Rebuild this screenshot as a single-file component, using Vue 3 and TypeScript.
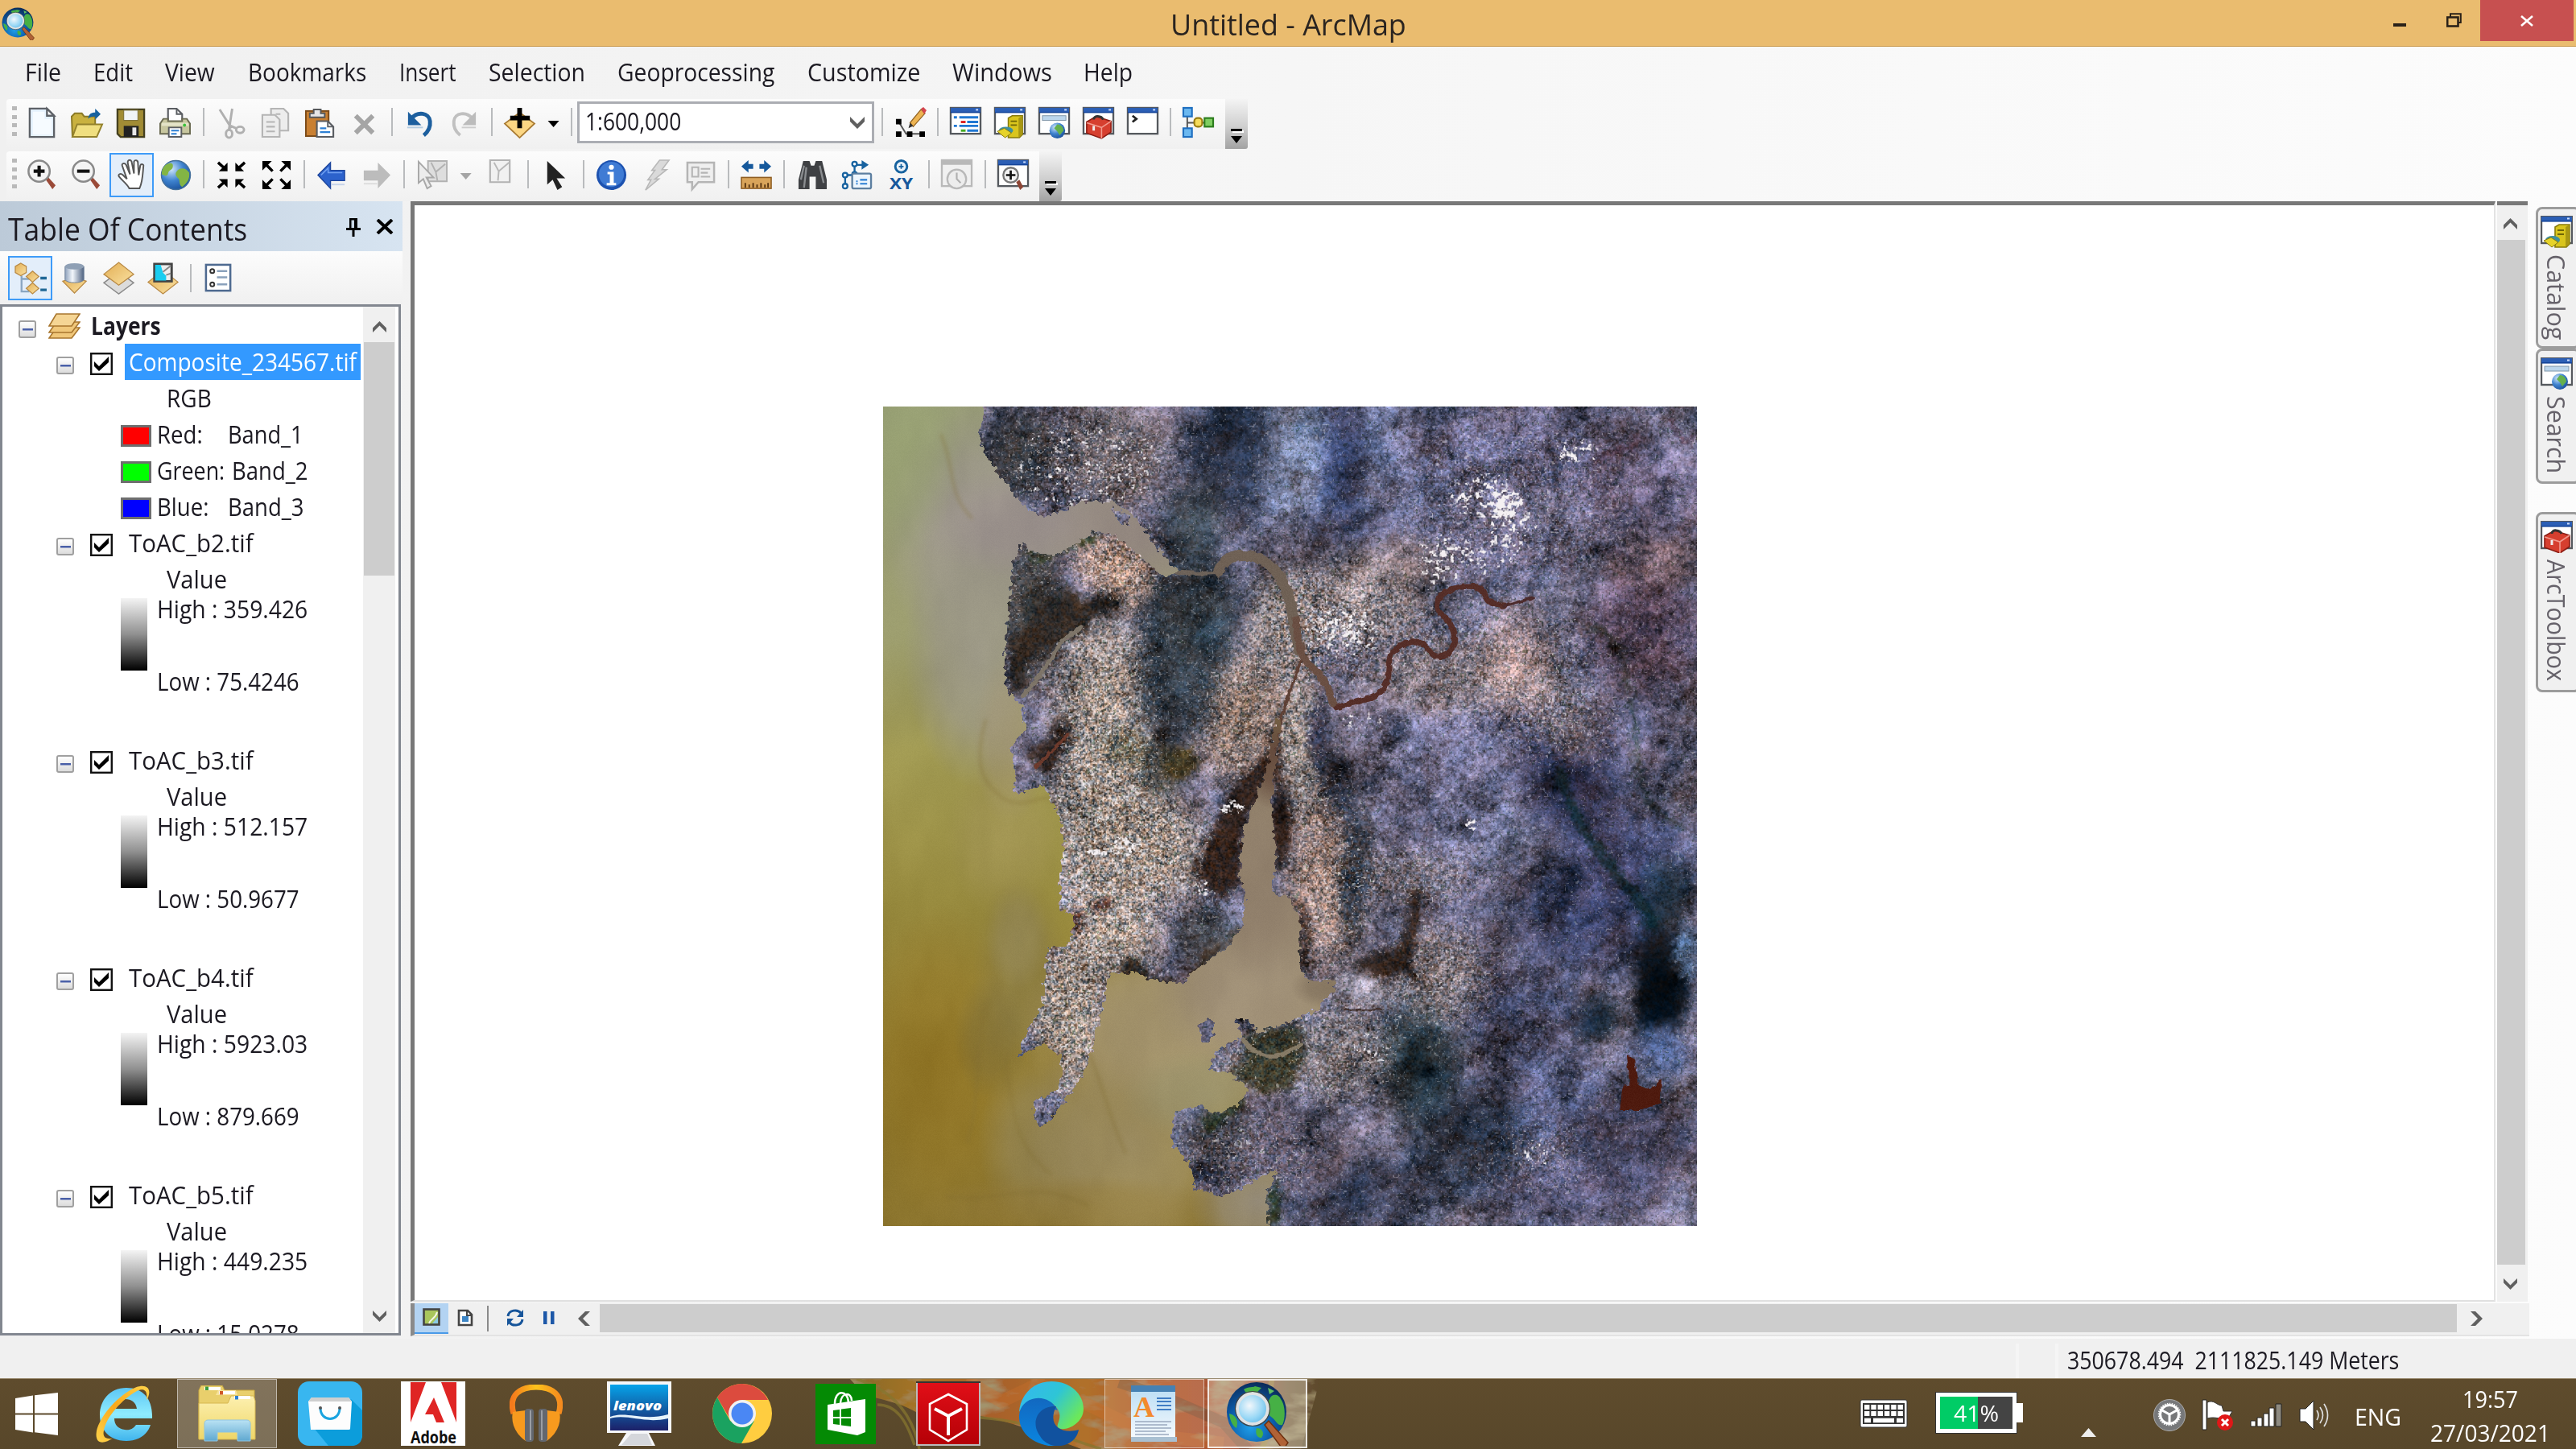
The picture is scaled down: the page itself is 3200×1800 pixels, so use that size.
<script setup lang="ts">
import { onMounted, ref } from 'vue'

type Item = { k: 'b' | 's' | 'c' | 'combo'; i?: string; on?: boolean }

/* squeezes a label along its reading direction so that it takes exactly the given length */
const vFit = {
  mounted(el: HTMLElement, binding: { value: number; arg?: string }) {
    if (binding.arg === 'y') {
      el.style.transform = `scaleY(${binding.value / el.offsetHeight})`
      return
    }
    const natural = el.offsetWidth
    el.style.transform = `scaleX(${binding.value / natural})`
    el.style.marginRight = `${binding.value - natural}px`
  },
}

const menus: [string, number, number][] = [
  ['File', 45, 31], ['Edit', 49, 40], ['View', 62, 40], ['Bookmarks', 147, 41], ['Insert', 71, 41],
  ['Selection', 120, 40], ['Geoprocessing', 195, 40], ['Customize', 140, 41], ['Windows', 124, 39], ['Help', 61, 40],
]

const win = '<rect x="1" y="1" width="38" height="33" fill="#fff" stroke="#55595e" stroke-width="2.4"/><rect x="1" y="1" width="38" height="6" fill="#2c5fb5"/><rect x="1" y="6" width="38" height="1.6" fill="#17469a"/><rect x="33" y="2.5" width="3" height="2" fill="#cfe0ff"/>'
const layerTop = 'fill="url(#gold)" stroke="#b98a45" stroke-width="1.3"'

const icons: Record<string, string> = {
  doc: '<path d="M4 2h22l9 9v27H4z" fill="#e4f1fd" stroke="#5d6167" stroke-width="2.4"/><path d="M8 6h15v9h9v20H8z" fill="#f6fbff"/><path d="M26 2v9h9z" fill="#fff" stroke="#5d6167" stroke-width="2.4"/>',
  open: '<path d="M1 12l4-4h9l3 4h14v26H2z" fill="#c9b13f" stroke="#8b7a26" stroke-width="2"/><path d="M8 22h32l-7 16H2z" fill="#f0df80" stroke="#94822c" stroke-width="2"/><path d="M22 15c1-7 5-8 9-8V2l7 7-7 7v-4c-4 0-6 0-9 3z" fill="#17629f"/>',
  save: '<path d="M3 3h34v35H7l-4-4z" fill="#a18c35" stroke="#45401f" stroke-width="2.4"/><rect x="11" y="4" width="18" height="13" fill="#f1f4f7" stroke="#7a6d35"/><rect x="11" y="24" width="19" height="14" fill="#222"/><rect x="22" y="26" width="5" height="10" fill="#e8e8e8"/>',
  print: '<path d="M11 17V2h11l7 7v8" fill="#fff" stroke="#5a5d62" stroke-width="2.2"/><path d="M22 2v7h7" fill="none" stroke="#5a5d62" stroke-width="2"/><path d="M5 15h6v3h18v-3h6l4 6v13H1V21z" fill="#c7c69f" stroke="#6a6a52" stroke-width="2"/><rect x="3" y="20" width="34" height="4" fill="#e4e3c8"/><circle cx="32" cy="23" r="2" fill="#3bc13b"/><path d="M12 26h16v12H12z" fill="#fff" stroke="#5a5d62" stroke-width="2"/><path d="M15 30h10M15 34h7" stroke="#2d7fd3" stroke-width="2"/>',
  cut: '<g fill="none" stroke="#b0b0b0" stroke-width="3"><path d="M5 3l15 24M21 2l-4 26"/><ellipse cx="17" cy="34" rx="4" ry="5"/><ellipse cx="31" cy="29" rx="5" ry="4"/><path d="M19 24l7 3"/></g>',
  copy: '<g fill="#ededed" stroke="#b5b5b5" stroke-width="2.2"><path d="M14 2h16l6 6v22H14z"/><path d="M3 10h16l6 6v22H3z"/><path d="M8 19h11M8 25h11M8 31h11M20 9h6"/></g>',
  paste: '<rect x="2" y="5" width="29" height="32" fill="#c98032" stroke="#7b4a18" stroke-width="2"/><path d="M7 12V8h5V3h9v5h5v5H7z" fill="#e6e6e6" stroke="#56585b" stroke-width="2"/><path d="M16 18h14l7 7v13H16z" fill="#fff" stroke="#5a5d62" stroke-width="2.2"/><path d="M30 18v7h7" fill="none" stroke="#5a5d62" stroke-width="2"/><path d="M20 27h8M20 32h13" stroke="#2d7fd3" stroke-width="2.4"/>',
  del: '<path d="M9 11l22 22M31 11L9 33" stroke="#a5a5a5" stroke-width="6"/>',
  undo: '<path d="M9 15C17 5 32 7 33 18c1 9-3 14-8 18" fill="none" stroke="#1d5f9e" stroke-width="5"/><path d="M5 6v17h17z" fill="#1d5f9e"/><path d="M4 26h20" stroke="#b5cce0" stroke-width="2"/>',
  redo: '<path d="M31 15C23 5 8 7 7 18c-1 9 3 14 8 18" fill="none" stroke="#c0c0c0" stroke-width="4"/><path d="M35 6v17H18z" fill="#bcbcbc"/><path d="M17 26h18" stroke="#ccc" stroke-width="2"/>',
  add: '<path d="M20 7L39 21 20 39 1 21z" fill="#fbd684" stroke="#a97b33" stroke-width="1.8"/><path d="M20 1v26M8 14h25" stroke="#000" stroke-width="6"/>',
  edit: '<path d="M5 18L15 34h19M5 18v2" fill="none" stroke="#555" stroke-width="2"/><path d="M2 15h7v7H2zM2 31h7v7H2zM16 31h7v7h-7zM32 31h7v7h-7z"/><path d="M20 20L34 3l5 5-15 17z" fill="#edb452" stroke="#926323" stroke-width="1.3"/><path d="M34 2l3-2 4 4-3 5z" fill="#d4454e"/><path d="M18 27l2-7 4 4z" fill="#333"/>',
  tocw: win + '<path d="M5 13h4M5 24h4" stroke="#2077d2" stroke-width="3"/><path d="M12 13h24M12 24h24M22 19h14M22 30h14" stroke="#2077d2" stroke-width="3"/><path d="M14 19h6" stroke="#d22" stroke-width="3"/><path d="M14 30h6" stroke="#4a2" stroke-width="3"/>',
  catalog: win + '<path d="M18 14l5-3h13v24l-4 4H18z" fill="#d9c51d" stroke="#877a0c" stroke-width="1.6"/><path d="M31 14l5-3v24l-5 4z" fill="#a89713"/><path d="M21 18h8M21 23h8" stroke="#6f6507" stroke-width="1.8"/><ellipse cx="15" cy="30" rx="9" ry="5" fill="#3f8f9f"/><path d="M4 31l9-4 9 6-8 6z" fill="#e6d32a" stroke="#877a0c"/>',
  search: win + '<rect x="5" y="11" width="30" height="6" fill="#bcd6ec" stroke="#8096a8"/><circle cx="24" cy="30" r="10" fill="url(#globe)"/><path d="M24 22c5 0 8 4 8 8l-5 6-3-5-4-4z" fill="#65b14d"/>',
  toolbox: win + '<path d="M5 19l12-7 19 6v14l-12 8L5 33z" fill="#d63f2f" stroke="#8b1c13" stroke-width="1.6"/><path d="M5 20l19 6 12-8M24 26v14" stroke="#f29a8e" stroke-width="1.6" fill="none"/><path d="M14 16c0-6 10-5 12 0" fill="none" stroke="#333" stroke-width="3"/><path d="M14 24v6" stroke="#eee" stroke-width="3"/>',
  python: win + '<path d="M7 11l5 4-5 4" fill="none" stroke="#222" stroke-width="2.8"/>',
  model: '<path d="M6 6v28M6 20h30" stroke="#555" stroke-width="2"/><g stroke-width="2.2"><rect x="1" y="1" width="11" height="11" fill="#6bb8f0" stroke="#1f6fc0"/><rect x="1" y="27" width="11" height="11" fill="#6bb8f0" stroke="#1f6fc0"/><rect x="15" y="14" width="10" height="11" rx="4" fill="#f6dc5b" stroke="#9a7d10"/><rect x="28" y="14" width="11" height="11" fill="#7fce62" stroke="#2c7d1d"/></g>',
  zin: '<path d="M24 25l3-3 10 11-4 5z" fill="#9b4a38"/><circle cx="16" cy="15" r="13.5" fill="#f4f4f4" stroke="#8a8a8a" stroke-width="2.6"/><path d="M16 8v14M9 15h14" stroke="#111" stroke-width="4.2"/>',
  zout: '<path d="M24 25l3-3 10 11-4 5z" fill="#9b4a38"/><circle cx="16" cy="15" r="13.5" fill="#f4f4f4" stroke="#8a8a8a" stroke-width="2.6"/><path d="M8 15h16" stroke="#111" stroke-width="4.2"/>',
  pan: '<path d="M17 37c-3-6-8-9-13-15-2-3 2-5 5-2l5 5L8 8c-1-3 3-4 5-1l5 12-3-15c0-4 4-4 5-1l3 15V3c1-3 5-2 5 1l1 16 2-12c1-3 5-2 4 1-1 12-1 20-5 28z" fill="#fff" stroke="#565656" stroke-width="2"/>',
  globe: '<circle cx="20" cy="20" r="18.5" fill="url(#globe)" stroke="#44709c" stroke-width="1.4"/><path d="M9 6c6-3 8 0 7 4s-5 3-6 8-6 2-8 1C2 12 5 8 9 6zM22 14c5-4 11-3 15 3 1 8-3 14-9 18-5-3-2-8-5-11s-5-6-1-10z" fill="#83b544"/>',
  fixin: '<path d="M3 4l9 8M3 36l9-8M37 4l-9 8M37 36l-9-8" stroke="#000" stroke-width="3.6"/><path d="M15 15H4L15 4zM15 25H4l11 11zM25 15h11L25 4zM25 25h11L25 36z"/>',
  fixout: '<path d="M7 7l8 8M7 33l8-8M33 7l-8 8M33 33l-8-8" stroke="#000" stroke-width="3.6"/><path d="M2 2h12L2 14zM2 38h12L2 26zM38 2H26l12 12zM38 38H26l12-12z"/>',
  back: '<path d="M2 20L18 4v10h18v13H18v10z" fill="#2c62cc" stroke="#1d459c" stroke-width="1.4"/><path d="M6 20l9-9v6h18" fill="none" stroke="#6f9ff0" stroke-width="1.6"/><path d="M19 32h17" stroke="#c6d3ea" stroke-width="2"/>',
  fwd: '<path d="M38 20L22 4v10H4v13h18v10z" fill="#bcbcbc"/><path d="M4 31h17" stroke="#ddd" stroke-width="2"/>',
  select: '<path d="M14 2h24v26H14z" fill="#dedede" stroke="#b2b2b2" stroke-width="2"/><path d="M18 4l6 12 12-10M24 16l2 11" stroke="#b2b2b2" stroke-width="2" fill="none"/><path d="M2 3v27l6-5 5 12 5-3-6-11h9z" fill="#ececec" stroke="#a8a8a8" stroke-width="2"/>',
  clear: '<path d="M7 1h25v28H7z" fill="#f1f1f1" stroke="#b2b2b2" stroke-width="2.2"/><path d="M12 4l6 11 13-11M18 15l-1 12" stroke="#b8b8b8" stroke-width="2" fill="none"/>',
  arrow: '<path d="M9 2v30l7-6 6 13 6-4-7-11h11z" fill="#222"/>',
  info: '<circle cx="20" cy="20" r="19" fill="#1d52b0"/><circle cx="20" cy="19" r="16" fill="#3f7bd4"/><circle cx="20" cy="10" r="3.2" fill="#fff"/><path d="M15 16h8v14h3v3H14v-3h4V19h-3z" fill="#fff"/>',
  bolt: '<path d="M24 1h12l-9 12h6L18 25h5L6 39l7-13H9l9-12h-4z" fill="#dadada" stroke="#b8b8b8" stroke-width="1.6"/>',
  html: '<path d="M3 4h34v25H17l-8 9v-9H3z" fill="#efefef" stroke="#b5b5b5" stroke-width="2.6"/><path d="M9 10h8v12H9zM20 12h12M20 17h9M20 22h12" fill="none" stroke="#b5b5b5" stroke-width="2.2"/>',
  measure: '<path d="M1 9l9-8v5h6v6h-6v5zM39 9l-9-8v5h-6v6h6v5z" fill="#16599c"/><rect x="1" y="23" width="38" height="14" fill="#d9a45a" stroke="#8e5d22" stroke-width="1.6"/><path d="M6 36v-6M11 36v-4M16 36v-6M21 36v-4M26 36v-6M31 36v-4M35 36v-6" stroke="#5b3712" stroke-width="2"/>',
  binoc: '<path d="M8 2h8l2 6h4l2-6h8l6 24v12H24V22h-8v16H2V26z" fill="#3f4144"/><path d="M9 8l-4 18M12 10L9 36M29 8l5 22" stroke="#8a8d90" stroke-width="2.4"/>',
  route: '<path d="M5 34V20h12V7h10" fill="none" stroke="#17629f" stroke-width="2.4"/><path d="M26 1l9 6-9 6z" fill="#17629f"/><g fill="#fff" stroke="#17629f" stroke-width="2.4"><circle cx="5" cy="34" r="3"/><circle cx="5" cy="20" r="3"/><circle cx="17" cy="19" r="3"/><circle cx="17" cy="6" r="3"/></g><rect x="14" y="18" width="24" height="19" rx="2" fill="#eef6fd" stroke="#5d7fa0" stroke-width="2.4"/><path d="M19 28h2M24 26h9M24 31h9M19 31h2" stroke="#2d7fd3" stroke-width="2.2"/>',
  xy: '<circle cx="20" cy="9" r="7.5" fill="#eaf3fb" stroke="#17629f" stroke-width="3"/><path d="M20 6v6M17 9h6" stroke="#17629f" stroke-width="1.8"/><text x="20" y="38" text-anchor="middle" font-family="Open Sans, sans-serif" font-weight="700" font-size="20" textLength="30" lengthAdjust="spacingAndGlyphs" fill="#17589c">XY</text>',
  time: '<rect x="1" y="1" width="38" height="33" fill="#f1f1f1" stroke="#b9b9b9" stroke-width="2.4"/><path d="M1 4h38" stroke="#b9b9b9" stroke-width="6"/><circle cx="20" cy="25" r="12" fill="#ededed" stroke="#b9b9b9" stroke-width="2.4"/><path d="M20 17v8l5 5" fill="none" stroke="#b0b0b0" stroke-width="2.2"/>',
  viewer: win + '<path d="M24 29l4-3 5 9-4 4z" fill="#8d4535"/><circle cx="17" cy="20" r="9.5" fill="#f3f3f3" stroke="#777" stroke-width="2.4"/><path d="M17 14v12M11 20h12" stroke="#111" stroke-width="2.8"/>',
  byorder: `<path d="M9 17v20h10M9 21h10" fill="none" stroke="#8aa6c2" stroke-width="2.4"/><path d="M8 1l7 4v8l-7 4-7-4V5z" ${layerTop}/><path d="M23 11l8 7-8 7-8-7z" ${layerTop}/><path d="M23 26l8 7-8 7-8-7z" ${layerTop}/><path d="M33 20h8M33 35h8" stroke="#1f6796" stroke-width="3.4"/>`,
  bysource: `<path d="M5 24l15-5 15 5-15 15z" ${layerTop}/><path d="M8 5v17c2 5 22 5 24 0V5z" fill="url(#steel)" stroke="#72849b"/><ellipse cx="20" cy="5" rx="12" ry="4" fill="#8fa0b5"/>`,
  byvis: `<path d="M20 12l19 14-19 14L1 26z" fill="#dcdcdc" stroke="#8a8a8a" stroke-width="1.5"/><path d="M20 0l19 15-19 14L1 15z" ${layerTop}/>`,
  bysel: `<path d="M20 10l19 15-19 15L1 25z" ${layerTop}/><rect x="9" y="2" width="22" height="22" fill="#eee" stroke="#444" stroke-width="3"/><path d="M10 3h7l3 10 4 4v6H10z" fill="#19cdf0"/><path d="M30 4l-10 8M24 16l6-2" stroke="#888" stroke-width="2"/>`,
  opts: '<rect x="4" y="3" width="31" height="33" fill="#fff" stroke="#4e6a90" stroke-width="2.6"/><circle cx="12" cy="11" r="2.6" fill="none" stroke="#333" stroke-width="2"/><circle cx="12" cy="28" r="2.6" fill="none" stroke="#333" stroke-width="2"/><path d="M18 11h13M18 19h13M18 28h13" stroke="#8aa1bb" stroke-width="2.6"/>',
}

const b = (i: string, on = false): Item => ({ k: 'b', i, on })
const s: Item = { k: 's' }
const standard: Item[] = [
  b('doc'), b('open'), b('save'), b('print'), s, b('cut'), b('copy'), b('paste'), b('del'), s, b('undo'), b('redo'), s,
  b('add'), { k: 'c' }, s, { k: 'combo' }, s, b('edit'), s, b('tocw'), b('catalog'), b('search'), b('toolbox'), b('python'), s, b('model'),
]
const tools: Item[] = [
  b('zin'), b('zout'), b('pan', true), b('globe'), s, b('fixin'), b('fixout'), s, b('back'), b('fwd'), s, b('select'), { k: 'c', on: true },
  b('clear'), s, b('arrow'), s, b('info'), b('bolt'), b('html'), s, b('measure'), s, b('binoc'), b('route'), b('xy'), s, b('time'), s, b('viewer'),
]
const tocTools: Item[] = [b('byorder', true), b('bysource'), b('byvis'), b('bysel'), s, b('opts')]

const bands: [string, number, number, string, number, string][] = [
  ['Red:', 57, 31, 'Band_1', 94, '#ff0000'],
  ['Green:', 84, 9, 'Band_2', 95, '#00ff00'],
  ['Blue:', 64, 24, 'Band_3', 95, '#0000ff'],
]
const rasters = [
  { name: 'ToAC_b2.tif', high: '359.426', low: '75.4246' },
  { name: 'ToAC_b3.tif', high: '512.157', low: '50.9677' },
  { name: 'ToAC_b4.tif', high: '5923.03', low: '879.669' },
  { name: 'ToAC_b5.tif', high: '449.235', low: '15.0278' },
]
const coords = '350678.494  2111825.149 Meters'
const tabs: [string, string, number, number][] = [
  ['catalog', 'Catalog', 106, 176], ['search', 'Search', 96, 168], ['toolbox', 'ArcToolbox', 151, 224],
]

/* ---------- satellite raster ---------- */
const raster = ref<HTMLCanvasElement | null>(null)
const W = 1011
const H = 1018

function hash(x: number, y: number, k: number): number {
  let h = Math.imul(x, 374761393) ^ Math.imul(y, 668265263) ^ Math.imul(k, 974634777)
  h = Math.imul(h ^ (h >>> 13), 1274126177)
  return ((h ^ (h >>> 16)) >>> 0) / 4294967296
}
function noise(x: number, y: number, k: number): number {
  const xi = Math.floor(x), yi = Math.floor(y)
  const fx = x - xi, fy = y - yi
  const u = fx * fx * (3 - 2 * fx), v = fy * fy * (3 - 2 * fy)
  const a = hash(xi, yi, k), c = hash(xi + 1, yi, k), d = hash(xi, yi + 1, k), e = hash(xi + 1, yi + 1, k)
  return (a + (c - a) * u) * (1 - v) + (d + (e - d) * u) * v
}
/* fractal sum over a rotated lattice, centred on zero */
function fractal(x: number, y: number, size: number, k: number): number {
  let sum = 0, amp = 0.5, px = x * 0.87 + y * 0.42, py = y * 0.8 - x * 0.4
  for (let i = 0; i < 4; i++) {
    sum += (noise(px / size, py / (size * 1.25), k + i) - 0.5) * amp
    size *= 0.45
    amp *= 0.72
    const t = px
    px = px * 0.8 + py * 0.6
    py = py * 0.8 - t * 0.6
  }
  return sum
}
function layer(): CanvasRenderingContext2D {
  const c = document.createElement('canvas')
  c.width = W
  c.height = H
  const g = c.getContext('2d', { willReadFrequently: true })!
  g.scale(W / 1538, H / 1549)
  g.translate(-11, -8)
  return g
}
type Blob = [number, number, number, number, string, number, number?]
function blobs(g: CanvasRenderingContext2D, list: Blob[]) {
  for (const [x, y, rx, ry, rgb, a, rot = 0] of list) {
    g.save()
    g.translate(x, y)
    g.rotate((rot * Math.PI) / 180)
    g.scale(rx, ry)
    const r = g.createRadialGradient(0, 0, 0, 0, 0, 1)
    r.addColorStop(0, `rgba(${rgb},${a})`)
    r.addColorStop(0.55, `rgba(${rgb},${a * 0.75})`)
    r.addColorStop(1, `rgba(${rgb},0)`)
    g.fillStyle = r
    g.fillRect(-1, -1, 2, 2)
    g.restore()
  }
}
const seaPath = 'M0 0H203L192 80L240 150L275 195L315 218L350 206L400 186L445 188L485 212L512 250L532 280L568 318L545 330L518 312L480 274L440 248L405 245L370 272L330 292L295 284L275 266L256 300L248 400L240 480L245 545L275 575L280 620L252 650L262 700L258 738L280 738L310 722L335 760L354 820L345 900L345 960L368 970L372 990L360 1030L325 1030L315 1080L312 1140L282 1190L265 1242L285 1222L318 1214L345 1232L352 1270L338 1298L295 1325L300 1372L322 1362L362 1310L395 1258L412 1200L430 1130L440 1080L490 1078L520 1095L580 1096L610 1065L660 1030L690 990L695 940L685 890L690 820L714 750L738 690L754 600L762 600L756 650L745 760L754 860L746 926L780 940L800 985L797 1060L812 1092L865 1095L862 1115L832 1148L780 1170L720 1190L700 1168L678 1166L690 1198L640 1228L626 1262L665 1268L700 1300L682 1328L640 1345L605 1328L558 1345L557 1400L590 1440L600 1485L650 1502L700 1480L755 1450L735 1500L742 1570H0Z'

function paintRaster(canvas: HTMLCanvasElement) {
  const sea = layer()
  const gr = sea.createLinearGradient(0, 8, 0, 1557)
  gr.addColorStop(0, '#999d78')
  gr.addColorStop(0.28, '#9c9d6e')
  gr.addColorStop(0.42, '#a09952')
  gr.addColorStop(0.6, '#988b3f')
  gr.addColorStop(0.8, '#90792d')
  gr.addColorStop(1, '#8b742d')
  sea.fillStyle = gr
  sea.fillRect(0, 0, 1600, 1600)
  blobs(sea, [
    [200, 250, 190, 250, '156,150,140', 1], [190, 470, 140, 260, '156,152,134', 1], [330, 230, 260, 110, '154,144,140', 1], [500, 250, 180, 130, '148,136,128', 1], [250, 640, 70, 160, '160,148,118', 0.8],
    [240, 820, 110, 160, '160,146,86', 0.6], [270, 1080, 90, 190, '132,118,66', 0.7], [120, 1250, 150, 300, '146,116,34', 0.6],
    [320, 1400, 130, 180, '146,132,88', 0.8], [560, 1180, 300, 180, '164,147,106', 1], [480, 1400, 200, 240, '158,142,98', 1], [580, 1180, 260, 150, '162,146,108', 1], [740, 1060, 240, 230, '158,142,118', 1], [740, 1060, 200, 200, '158,142,118', 1],
    [725, 850, 130, 260, '144,127,107', 1], [725, 850, 110, 230, '144,127,107', 1], [750, 660, 70, 110, '104,78,64', 1], [720, 1510, 130, 110, '154,144,124', 1], [360, 1520, 300, 60, '148,124,60', 0.6], [620, 1310, 160, 90, '154,145,106', 1],
    [215, 1200, 70, 120, '118,106,62', 0.45], [265, 1010, 60, 100, '150,138,92', 0.6], [40, 60, 120, 240, '150,162,112', 0.6], [850, 1105, 70, 40, '128,112,92', 0.8],
  ])
  sea.filter = 'blur(2px)'
  sea.strokeStyle = 'rgba(130,108,50,.3)'
  sea.lineWidth = 6
  for (const d of ['M205 600C180 690 200 720 240 750C280 770 310 740 330 750', 'M120 60C150 130 130 170 180 220', 'M400 1230C430 1300 440 1360 470 1420', 'M130 1500C220 1520 300 1460 400 1520', 'M210 1130C180 1200 200 1300 170 1400', 'M240 1240C260 1330 250 1400 330 1460'])
    sea.stroke(new Path2D(d))
  sea.filter = 'none'

  const land = layer()
  land.fillStyle = '#66637a'
  land.fillRect(0, 0, 1600, 1600)
  const tan = '152,138,130', dark = '46,48,50', blue = '90,100,136', night = '24,32,52', forest = '46,56,66', mauve = '92,80,104'
  blobs(land, [
    [900, 100, 330, 170, blue, 0.8], [780, 80, 90, 170, '104,114,142', 0.9], [1050, 130, 120, 160, '104,104,138', 0.7], [1250, 70, 280, 140, '98,94,126', 0.8], [1450, 180, 180, 130, mauve, 0.8], [1450, 430, 150, 170, '82,62,84', 0.8],
    [1480, 300, 110, 60, '122,92,92', 0.6], [670, 80, 110, 190, '34,42,60', 1], [880, 110, 55, 170, '44,50,80', 0.9], [440, 100, 140, 130, '108,98,100', 0.85], [270, 100, 90, 110, dark, 0.9], [900, 230, 120, 70, '62,64,92', 0.6],
    [600, 230, 80, 110, '50,56,64', 0.9], [1180, 280, 200, 110, '90,88,118', 0.6], [1160, 640, 280, 160, '106,106,140', 0.9], [1050, 770, 180, 120, '108,108,142', 0.8],
    [1320, 720, 130, 170, '38,40,66', 1, -20], [1440, 640, 110, 140, '74,70,94', 0.7], [1200, 980, 190, 140, '78,76,100', 0.7], [1360, 960, 190, 170, '48,52,82', 1], [1430, 850, 140, 110, '52,56,90', 0.8],
    [1480, 1110, 75, 170, '6,14,22', 1], [1480, 1110, 55, 120, '6,14,22', 1], [1350, 1160, 70, 60, '14,26,34', 0.95], [1490, 930, 60, 90, '20,36,48', 0.9], [1530, 1040, 30, 70, '90,118,158', 0.8], [1220, 1150, 160, 110, '68,70,104', 0.7],
    [1250, 1300, 200, 120, '72,78,116', 0.7], [1480, 1230, 90, 60, '74,88,130', 0.8], [1430, 1400, 180, 120, '58,56,80', 0.85], [1110, 1390, 150, 150, '36,44,60', 0.95], [1020, 1240, 105, 160, '34,46,52', 1], [900, 1500, 200, 100, '48,52,72', 0.9],
    [1320, 1500, 230, 80, '70,68,98', 0.7], [800, 1400, 150, 110, '88,78,92', 0.8],
    [430, 560, 130, 220, tan, 1], [430, 800, 160, 220, '156,143,134', 1], [440, 1010, 120, 130, tan, 1], [360, 1160, 80, 170, tan, 1], [360, 1160, 90, 180, tan, 0.8], [540, 850, 120, 130, tan, 0.9],
    [690, 600, 120, 170, '144,122,112', 1], [770, 420, 90, 140, tan, 0.8], [450, 300, 100, 70, '158,130,118', 1], [480, 350, 70, 60, '158,130,118', 0.9], [850, 900, 110, 230, '142,118,110', 1], [800, 650, 60, 170, tan, 0.9],
    [900, 380, 170, 110, '142,130,132', 0.95], [980, 310, 130, 70, '128,112,114', 0.7], [1100, 520, 230, 90, '130,116,118', 0.8], [1210, 490, 90, 130, '150,122,118', 0.7], [1290, 590, 120, 70, '124,112,118', 0.7, 50],
    [1060, 1080, 110, 110, '128,114,114', 0.85], [1000, 900, 130, 60, '118,112,122', 0.7], [940, 1110, 110, 50, '124,120,132', 0.9], [870, 1230, 120, 110, '126,118,122', 0.9], [710, 1260, 90, 60, '118,108,106', 0.7],
    [590, 450, 110, 190, forest, 1, 12], [590, 410, 110, 130, forest, 1], [560, 560, 90, 120, '50,58,68', 0.9], [540, 690, 70, 70, '70,68,60', 0.8], [600, 250, 60, 90, forest, 0.8],
    [870, 720, 44, 140, '46,50,66', 1, -22], [905, 900, 42, 150, '44,50,62', 1, 6], [835, 620, 26, 90, '54,52,72', 0.9], [620, 1010, 80, 80, '62,68,76', 0.9], [290, 400, 80, 180, '46,46,44', 1], [470, 650, 60, 50, '82,80,66', 0.7],
    [640, 1390, 90, 80, '76,74,82', 0.8], [620, 1460, 40, 30, night, 0.8],
  ])
  const poly = (d: string, fill: string, blur = 5) => {
    land.filter = `blur(${blur}px)`
    land.fillStyle = fill
    land.fill(new Path2D(d))
    land.filter = 'none'
  }
  poly('M320 370L360 345L400 365L465 360L455 385L420 400L400 430L340 460L290 480L280 540L250 555L250 450Z', '#2b2420')
  poly('M365 590L365 640L330 700L300 695L280 660L320 640Z', '#352722')
  poly('M755 600L765 720L790 800L770 880L752 890L745 760L750 690L715 760L690 830L690 905L655 945L590 885L640 800L660 740L720 680Z', '#33241f')
  poly('M760 925L810 960L812 1060L800 1080L790 960Z', '#37261f', 3)
  poly('M1010 920L1030 925L1020 1010L1010 1060L1040 1105L990 1085L940 1085L885 1075L920 1050L980 1030Z', '#2e231f')
  poly('M690 1195L800 1168L806 1240L780 1300L730 1310L665 1265L690 1245Z', '#37382d')
  poly('M360 965L382 960L380 1010L365 1000ZM400 955L440 935L450 950L410 965Z', '#42241e', 3)
  poly('M580 1085L620 1040L690 990L690 1005L650 1035L600 1090ZM440 1075L480 1040L515 1085L570 1090L560 1100L500 1095Z', '#2f2823', 3)
  poly('M545 665L590 650L605 680L580 715L545 705Z', '#46381f', 3)
  poly('M280 275L330 290L410 245L425 255L370 280L310 300Z', '#26331c', 3)
  poly('M735 1500L760 1460L755 1557H730Z', '#222d1b', 4)
  poly('M610 1340L650 1345L680 1310L695 1325L650 1370L620 1380Z', '#2b3423', 4)
  const line = (d: string, c: string, w: number) => {
    land.strokeStyle = c
    land.lineWidth = w
    land.lineJoin = 'round'
    land.filter = 'blur(2px)'
    land.stroke(new Path2D(d))
    land.filter = 'none'
  }
  line('M1280 30C1260 100 1300 150 1280 220S1260 330 1230 370', 'rgba(38,36,46,.7)', 8)
  line('M1350 120C1390 70 1440 110 1430 60M1500 30C1500 70 1540 90 1549 60', 'rgba(64,34,44,.8)', 7)
  line('M1290 330C1330 260 1400 270 1440 310', 'rgba(60,40,50,.7)', 7)
  line('M1330 420C1430 430 1400 520 1425 580S1420 700 1470 770L1520 810', 'rgba(30,42,36,.7)', 9)
  line('M1290 690C1310 780 1350 820 1390 880S1450 930 1470 1000', 'rgba(14,32,34,.75)', 20)
  line('M810 340C800 290 820 262 860 270', 'rgba(70,50,46,.7)', 6)

  const water = layer()
  water.fillStyle = '#fff'
  water.fill(new Path2D(seaPath))
  water.globalCompositeOperation = 'destination-out'
  water.fill(new Path2D('M605 1180L625 1165L640 1175L635 1200L615 1208ZM440 195L475 215L480 235L455 225Z'))
  water.globalCompositeOperation = 'source-over'

  const rivers = layer()
  rivers.lineJoin = 'round'
  rivers.lineCap = 'round'
  const river = (d: string, c: string, w: number) => {
    rivers.strokeStyle = c
    rivers.lineWidth = w
    rivers.stroke(new Path2D(d))
  }
  river('M530 300L566 322L610 324L640 322', '#6d6259', 8)
  river('M645 320C655 295 670 290 695 290S740 304 756 324S780 370 786 410L798 470', '#6f6155', 20)
  river('M790 410C800 480 800 480 830 510S850 550 866 575', '#6a4f43', 14)
  river('M800 490L765 590L748 680', '#5e4035', 6)
  river('M866 578C890 570 915 564 930 560S965 540 966 515S962 470 1000 455S1040 485 1065 480S1096 450 1086 425S1052 400 1058 378S1100 345 1128 348S1140 385 1185 384', '#552e28', 11)
  river('M1185 384L1240 370', '#4c2b2c', 6)
  river('M275 555C310 520 330 480 350 450L385 425', '#7d7468', 8)
  river('M300 690L360 630', '#6d3a2c', 7)
  river('M690 1205C730 1250 760 1240 800 1215', '#857a66', 7)
  river('M885 1148H950', '#43322f', 4)
  rivers.fillStyle = '#4e1a0e'
  rivers.fill(new Path2D('M1415 1235L1430 1240L1438 1290L1462 1300L1482 1278L1480 1325L1445 1338H1405L1410 1292L1422 1290Z'))

  /* red: built-up density, green: cloud density */
  const info = layer()
  info.fillStyle = '#000'
  info.fillRect(0, 0, 1600, 1600)
  info.globalCompositeOperation = 'lighter'
  const up = '255,0,0', cl = '0,255,0'
  blobs(info, [
    [430, 560, 130, 230, up, 0.9], [430, 820, 170, 240, up, 1], [420, 1020, 150, 150, up, 0.9], [350, 1190, 100, 200, up, 1], [580, 870, 130, 140, up, 0.7], [690, 600, 120, 180, up, 0.7], [400, 120, 190, 130, up, 0.6],
    [460, 300, 120, 90, up, 0.9], [780, 420, 100, 140, up, 0.7], [850, 900, 110, 230, up, 0.8], [900, 420, 180, 140, up, 0.8], [1180, 500, 230, 150, up, 0.6], [1060, 1080, 140, 140, up, 0.7], [870, 1220, 170, 130, up, 0.6], [800, 650, 60, 170, up, 0.6],
    [700, 1430, 180, 110, up, 0.6], [1020, 900, 180, 70, up, 0.6], [1300, 620, 130, 90, up, 0.5], [1230, 1420, 160, 90, up, 0.4], [290, 420, 90, 200, up, 0.35], [700, 1240, 110, 80, up, 0.6], [1200, 200, 250, 200, up, 0.4],
    [1150, 180, 80, 50, cl, 0.75], [1200, 225, 60, 60, cl, 0.65], [1120, 285, 110, 50, cl, 0.5], [1320, 92, 60, 26, cl, 0.75], [880, 430, 80, 60, cl, 0.7], [470, 838, 34, 26, cl, 1], [400, 120, 180, 110, cl, 0.3], [1060, 310, 60, 60, cl, 0.45],
    [920, 605, 50, 30, cl, 0.5], [1120, 795, 18, 18, cl, 0.6], [670, 765, 30, 16, cl, 0.8], [610, 915, 26, 26, cl, 0.5], [420, 850, 40, 8, cl, 0.9], [940, 1220, 50, 40, cl, 0.35], [1240, 1420, 50, 40, cl, 0.3],
  ])

  const px = (g: CanvasRenderingContext2D) => g.getImageData(0, 0, W, H).data
  const S = px(sea), L = px(land), M = px(water), R = px(rivers), I = px(info)
  const out = canvas.getContext('2d')!
  const img = out.createImageData(W, H)
  const O = img.data
  const clamp = (v: number, hi: number) => Math.min(hi, Math.max(0, Math.round(v)))
  for (let y = 0; y < H; y++) {
    for (let x = 0; x < W; x++) {
      const o = (y * W + x) * 4
      const jx = noise(x / 4, y / 4, 1) - 0.5, jy = noise(x / 4, y / 4, 2) - 0.5
      const q = (clamp(y + jy * 7, H - 1) * W + clamp(x + jx * 7, W - 1)) * 4
      /* soft cover types get a much wider jitter, so their borders break up */
      const wx = fractal(x, y, 30, 40) * 60, wy = fractal(x, y, 30, 50) * 60
      const l = (clamp(y + jy * 7 + wy * 0.5, H - 1) * W + clamp(x + jx * 7 + wx * 0.5, W - 1)) * 4
      let r: number, g: number, c: number
      if (M[q + 3] > 128) {
        const n = (noise(x / 60 + y / 160, y / 90, 3) - 0.5) * 10 + (noise(x / 14, y / 30, 4) - 0.5) * 4 + (hash(x, y, 5) - 0.5) * 4
        r = S[o] + n
        g = S[o + 1] + n
        c = S[o + 2] + n * 0.8
      } else {
        const u = I[o] / 255
        const lr = (L[l] + L[q]) / 2, lg = (L[l + 1] + L[q + 1]) / 2, lb = (L[l + 2] + L[q + 2]) / 2
        const lum = (lr + lg + lb) / 3
        const fine = noise(x / 1.8, y / 1.8, 6) - 0.5
        const mid = noise(x / 4.2, y / 4.2, 7) - 0.5
        const big = fractal(x, y, 34, 60)
        const f = 1.04 + fine * (0.5 + u * 0.5) + mid * (0.34 + u * 0.25) + big * (1.5 - u * 1.0)
        const tint = (noise(x / 3, y / 3, 10) - 0.5) * (10 + 34 * u)
        const cool = fractal(x, y, 26, 70) * 24 * (1 - u)
        r = lr * f + tint - cool
        g = lg * f
        c = lb * f - tint * 0.8 + cool * 0.8
        const spark = noise(x / 2.2, y / 2.2, 11) + mid * 0.12
        if (spark > 0.84 - u * 0.1 && lum > 52) {
          const a = Math.min(1, (spark - 0.7) * (1 + 1.8 * u))
          r += (250 - r) * a
          g += (246 - g) * a
          c += (246 - c) * a
        }
        if (noise(x / 2.4, y / 2.4, 12) > 0.84 - 0.05 * u) {
          r *= 0.72
          g *= 0.8
          c *= 0.72
        }
        const cloud = I[o + 1] / 255
        if (cloud > 0.12) {
          const a = Math.min(1, Math.max(0, (noise(x / 4.5, y / 4, 13) * 0.8 + fine * 0.4 + cloud * 0.5 - 0.72) * 4))
          r += (244 - r) * a
          g += (240 - g) * a
          c += (242 - c) * a
        }
      }
      const rq = (clamp(y + jy * 3, H - 1) * W + clamp(x + jx * 3, W - 1)) * 4
      const ra = R[rq + 3] / 255
      if (ra > 0 && M[q + 3] <= 128) {
        const n = (hash(x, y, 15) - 0.5) * 8
        r += (R[rq] + n - r) * ra
        g += (R[rq + 1] + n - g) * ra
        c += (R[rq + 2] + n - c) * ra
      }
      O[o] = r
      O[o + 1] = g
      O[o + 2] = c
      O[o + 3] = 255
    }
  }
  out.putImageData(img, 0, 0)
}

onMounted(() => {
  if (raster.value) paintRaster(raster.value)
})
</script>

<template>
  <div class="screen">
    <svg class="defs" width="0" height="0">
      <defs>
        <linearGradient id="gold" x1="0" y1="0" x2="1" y2="1"><stop offset="0" stop-color="#e2ad52" /><stop offset="1" stop-color="#fbe3a4" /></linearGradient>
        <linearGradient id="steel"><stop offset="0" stop-color="#8da0bb" /><stop offset=".4" stop-color="#f3f7fb" /><stop offset="1" stop-color="#4d6180" /></linearGradient>
        <radialGradient id="globe" cx=".35" cy=".3" r=".8"><stop offset="0" stop-color="#cfe6fb" /><stop offset=".5" stop-color="#3f83cf" /><stop offset="1" stop-color="#154a94" /></radialGradient>
        <radialGradient id="earth" cx=".4" cy=".75" r=".8"><stop offset="0" stop-color="#1fa0ea" /><stop offset=".5" stop-color="#0b5aa8" /><stop offset="1" stop-color="#0a2650" /></radialGradient>
        <radialGradient id="glass" cx=".4" cy=".4" r=".7"><stop offset="0" stop-color="#fff" /><stop offset=".6" stop-color="#9fdcf8" /><stop offset="1" stop-color="#5fb8e8" /></radialGradient>
        <linearGradient id="ie" x1="0" y1="0" x2="0" y2="1"><stop offset="0" stop-color="#5cc6f4" /><stop offset=".5" stop-color="#8fecff" /><stop offset="1" stop-color="#3fb4ec" /></linearGradient>
        <linearGradient id="ring" x1="0" y1="1" x2="1" y2="0"><stop offset="0" stop-color="#ffd34a" /><stop offset=".5" stop-color="#f9a91a" /><stop offset="1" stop-color="#ffd34a" /></linearGradient>
        <linearGradient id="folder" x1="0" y1="0" x2="0" y2="1"><stop offset="0" stop-color="#fdf0b0" /><stop offset="1" stop-color="#eed668" /></linearGradient>
        <linearGradient id="sky" x1="0" y1="0" x2="0" y2="1"><stop offset="0" stop-color="#b9e2f4" /><stop offset="1" stop-color="#5fa8d0" /></linearGradient>
        <linearGradient id="phones" x1="0" y1="0" x2="1" y2="0"><stop offset="0" stop-color="#f47a1c" /><stop offset=".5" stop-color="#fcc31c" /><stop offset="1" stop-color="#f58b1e" /></linearGradient>
        <linearGradient id="lenovo" x1="0" y1="0" x2="0" y2="1"><stop offset="0" stop-color="#06a4ea" /><stop offset="1" stop-color="#1c2068" /></linearGradient>
        <linearGradient id="edgeA" x1="0" y1="0" x2="1" y2=".6"><stop offset="0" stop-color="#35b6f2" /><stop offset=".55" stop-color="#2ec5d6" /><stop offset="1" stop-color="#6ce85a" /></linearGradient>
        <linearGradient id="edgeB" x1="0" y1="0" x2="0" y2="1"><stop offset="0" stop-color="#1268c0" /><stop offset="1" stop-color="#0a86e0" /></linearGradient>
        <linearGradient id="red" x1="0" y1="0" x2="0" y2="1"><stop offset="0" stop-color="#e20f18" /><stop offset="1" stop-color="#b40006" /></linearGradient>
        <linearGradient id="paper" x1="0" y1="0" x2="0" y2="1"><stop offset="0" stop-color="#b8dcf4" /><stop offset="1" stop-color="#f4f9fd" /></linearGradient>
        <linearGradient id="art" x1="0" y1="0" x2="1" y2="0"><stop offset="0" stop-color="#86682a" /><stop offset=".15" stop-color="#a67426" /><stop offset=".3" stop-color="#a8602a" /><stop offset=".5" stop-color="#b0702a" /><stop offset=".68" stop-color="#b0542c" /><stop offset=".85" stop-color="#a3533a" /><stop offset=".93" stop-color="#70583a" /><stop offset="1" stop-color="#5e4a2c" /></linearGradient>
        <filter id="grain" x="0" y="0" width="1" height="1"><feTurbulence type="fractalNoise" baseFrequency=".02 .05" numOctaves="4" seed="4" result="n" /><feColorMatrix in="n" values="0 0 0 0 .36  0 0 0 0 .29  0 0 0 0 .15  3 0 0 0 -1.5" result="m" /><feComposite in="m" in2="SourceAlpha" operator="in" result="k" /><feMerge><feMergeNode in="SourceGraphic" /><feMergeNode in="k" /></feMerge></filter>
        <g id="arcmap">
          <circle cx="38" cy="38" r="37" fill="url(#earth)" />
          <path d="M22 10c6-4 12-2 14-4l8 2-6 6-12 2zM54 22c3-8 12-6 14 0 6 8 6 24 2 32-6 2-8-6-14-10s-6-16-2-22zM4 40c8 2 12 8 9 18-4-2-8-8-9-18zM38 58c8 0 10 8 6 12-6 0-8-6-6-12z" fill="#46b045" />
          <path d="M52 8l8 4-6 4z" fill="#5ec062" />
          <path d="M48 54l5-5 24 27-6 9z" fill="#b06236" stroke="#6c3010" stroke-width="1.5" />
          <circle cx="33" cy="34" r="19" fill="url(#glass)" fill-opacity=".95" stroke="#dfe2e4" stroke-width="4" />
          <circle cx="33" cy="34" r="21.5" fill="none" stroke="#444" stroke-width="1.2" />
        </g>
      </defs>
    </svg>

    <header class="titlebar">
      <svg class="app-icon" viewBox="0 0 78 82" preserveAspectRatio="none"><use href="#arcmap" /></svg>
      <div class="title"><span v-fit="293" class="fit">Untitled - ArcMap</span></div>
      <div class="controls">
        <i class="min"></i>
        <svg class="restore" viewBox="0 0 19 18"><path d="M5 5V1.2h12.8V12H15" fill="none" stroke="#2a2118" stroke-width="2" /><rect x="1.2" y="5.5" width="13.3" height="11" fill="none" stroke="#2a2118" stroke-width="2.6" /></svg>
        <div class="close"><svg width="16" height="14" viewBox="0 0 16 14"><path d="M1 1l14 12M15 1L1 13" stroke="#fff" stroke-width="2.6" /></svg></div>
      </div>
    </header>

    <nav class="menu">
      <span v-for="[label, w, gap] in menus" :key="label" class="entry" :style="{ marginLeft: gap + 'px' }"><span v-fit="w" class="fit">{{ label }}</span></span>
    </nav>

    <div v-for="(bar, n) in [standard, tools]" :key="n" class="bar" :class="'bar' + n">
      <div class="strip">
        <i class="grip"></i>
        <template v-for="(it, j) in bar" :key="j">
          <span v-if="it.k === 'b'" class="btn" :class="{ on: it.on }"><svg viewBox="0 0 40 40" v-html="icons[it.i!]"></svg></span>
          <i v-else-if="it.k === 's'" class="sep"></i>
          <span v-else-if="it.k === 'c'" class="caret" :class="{ dim: it.on }"></span>
          <span v-else class="combo"><span v-fit="119" class="fit">1:600,000</span><svg width="20" height="17" viewBox="0 0 20 17"><path d="M1 1v6l9 9 9-9V1l-9 9z" fill="#606060" /></svg></span>
        </template>
      </div>
      <div class="endcap"><i></i><b></b></div>
    </div>

    <main class="main">
      <aside class="toc">
        <div class="toc-head">
          <span v-fit="297" class="fit">Table Of Contents</span>
          <svg class="pin" width="18" height="24" viewBox="0 0 18 24"><path d="M4 1h10v12h4v3h-7.500v8h-3v-8H0v-3h4z" /><path d="M6.500 3.500h3.500V13H6.500z" fill="#c9d7e5" /></svg>
          <svg class="x" width="22" height="19" viewBox="0 0 22 19"><path d="M2 1l18 17M20 1L2 18" stroke="#000" stroke-width="4" /></svg>
        </div>
        <div class="toc-tools">
          <template v-for="(it, j) in tocTools" :key="j">
            <span v-if="it.k === 'b'" class="btn" :class="{ on: it.on }"><svg viewBox="0 0 40 40" v-html="icons[it.i!]"></svg></span>
            <i v-else class="sep"></i>
          </template>
        </div>
        <div class="tree">
          <div class="rows">
            <div class="row root"><i class="exp"></i>
              <svg class="stack" width="40" height="32" viewBox="0 0 40 32"><g fill="#f0c77a" stroke="#a8762e" stroke-width="1.6"><path d="M10 18h29L29 31H1z" /><path d="M10 11h29L29 24H1z" /><path d="M10 1h29L29 16H1z" fill="#f5d594" /></g></svg>
              <b v-fit="87" class="fit">Layers</b></div>
            <div class="row item"><i class="exp"></i><svg class="check" viewBox="0 0 28 28"><rect x="1.200" y="1.200" width="25.600" height="25.600" fill="#fff" stroke="#111" stroke-width="2.400" /><path d="M5 11l6 6L23 5v7L11 23l-6-6z" /></svg><span class="label sel"><span v-fit="283" class="fit">Composite_234567.tif</span></span></div>
            <div class="row sub"><span v-fit="56" class="fit">RGB</span></div>
            <div v-for="[c, w1, gap, band, w2, col] in bands" :key="c" class="row band"><i class="swatch" :style="{ background: col }"></i><span v-fit="w1" class="fit">{{ c }}</span><span :style="{ width: gap + 'px' }"></span><span v-fit="w2" class="fit">{{ band }}</span></div>
            <div v-for="r in rasters" :key="r.name" class="raster">
              <div class="row item"><i class="exp"></i><svg class="check" viewBox="0 0 28 28"><rect x="1.200" y="1.200" width="25.600" height="25.600" fill="#fff" stroke="#111" stroke-width="2.400" /><path d="M5 11l6 6L23 5v7L11 23l-6-6z" /></svg><span class="label"><span v-fit="155" class="fit">{{ r.name }}</span></span></div>
              <div class="row sub"><span v-fit="75" class="fit">Value</span></div>
              <div class="ramp-row"><i class="ramp"></i><div class="ends"><span><span v-fit="187" class="fit">High : {{ r.high }}</span></span><span><span v-fit="177" class="fit">Low : {{ r.low }}</span></span></div></div>
            </div>
          </div>
          <div class="vscroll"><svg viewBox="0 0 20 17"><path d="M1 16v-6l9-9 9 9v6l-9-9z" fill="#606060" /></svg><i></i><svg viewBox="0 0 20 17"><path d="M1 1v6l9 9 9-9V1l-9 9z" fill="#606060" /></svg></div>
        </div>
      </aside>

      <section class="view">
        <div class="view-top">
          <div class="pane"><canvas ref="raster" :width="W" :height="H"></canvas></div>
          <div class="vbar"><svg viewBox="0 0 20 17"><path d="M1 16v-6l9-9 9 9v6l-9-9z" fill="#606060" /></svg><i></i><svg viewBox="0 0 20 17"><path d="M1 1v6l9 9 9-9V1l-9 9z" fill="#606060" /></svg></div>
        </div>
        <div class="view-bottom">
          <span class="vb on"><svg width="22" height="22" viewBox="0 0 22 22"><rect x="1.500" y="1.500" width="19" height="19" fill="#a9c65c" stroke="#444" stroke-width="2.600" /><path d="M12 19l7-8v8z" fill="#8ccbe6" /><path d="M8 19c2-6 8-6 10-14" stroke="#f4f6e6" stroke-width="2" fill="none" /></svg></span>
          <span class="vb"><svg width="20" height="22" viewBox="0 0 20 22"><path d="M2 2h11l5 5v13H2z" fill="#fff" stroke="#444" stroke-width="2.600" /><path d="M6 9h8v7H6z" fill="#3d86c6" /><path d="M12 2v6h6" fill="none" stroke="#444" stroke-width="2" /></svg></span>
          <i class="vsep"></i>
          <span class="vb ref"><svg width="22" height="22" viewBox="0 0 22 22"><path d="M2 9c1-8 12-9 16-4M20 13c-1 8-12 9-16 4" fill="none" stroke="#17559a" stroke-width="3" /><path d="M21 1v9h-8zM1 21v-9h8z" fill="#17559a" /></svg></span>
          <span class="vb pause"><svg width="16" height="18" viewBox="0 0 16 18"><path d="M1 1h4.500v16H1zM10 1h4.500v16H10z" fill="#1d58a8" /></svg></span>
          <svg class="hl" width="17" height="20" viewBox="0 0 17 20"><path d="M16 1h-6L1 10l9 9h6l-9-9z" fill="#606060" /></svg>
          <i class="hthumb"></i>
          <svg class="hr" width="17" height="20" viewBox="0 0 17 20"><path d="M1 1h6l9 9-9 9H1l9-9z" fill="#606060" /></svg>
        </div>
      </section>

      <aside class="tabs">
        <div v-for="[ic, label, w, h] in tabs" :key="ic" class="tab" :class="ic" :style="{ height: h + 'px' }">
          <svg viewBox="0 0 40 40" v-html="icons[ic]"></svg>
          <span v-fit:y="w" class="turn">{{ label }}</span>
        </div>
      </aside>
    </main>

    <div class="status"><i></i><i></i><span v-fit="412" class="fit">{{ coords }}</span></div>

    <footer class="taskbar">
      <svg class="art" width="600" height="87" viewBox="0 0 600 87">
        <g filter="url(#grain)"><path d="M6 0H590L566 88H296C262 76 220 56 168 46L100 50C84 34 50 26 24 20Z" fill="url(#art)" /></g>
        <path d="M150 2l44 26 46-22 70 30 70 34 90 10" fill="none" stroke="#d0702c" stroke-width="16" opacity=".3" />
        <path d="M340 4l60 20 70 30 30 34" fill="none" stroke="#4f4230" stroke-width="14" opacity=".35" />
        <path d="M14 0C60 14 84 44 92 87M40 32c24 0 36 20 46 50M168 48c60 4 100 24 150 39" fill="none" stroke="#86752f" stroke-width="3.500" opacity=".75" />
        <path d="M530 0c-6 30 2 50-12 87" fill="none" stroke="#9c8a3c" stroke-width="7" opacity=".6" />
      </svg>
      <span class="slot start"><svg width="53" height="53" viewBox="0 0 53 53" fill="#fff"><path d="M0 7l22-3.500v22H0zM24 3.200L53 0v25.500H24zM0 27.500h22v22L0 46zM24 27.500h29V53l-29-3.800z" /></svg></span>
      <span class="slot"><svg width="76" height="76" viewBox="0 0 76 76"><path d="M41 6C20 6 8 22 8 40c0 20 14 32 33 32 14 0 26-7 30-20H53c-4 6-10 7-14 6-8-1-13-6-13-14h47C74 20 62 6 41 6zM26 32c1-9 7-12 14-12s13 4 14 12z" fill="url(#ie)" /><path d="M66 22C76 4 62-2 44 10 18 26-4 60 6 72c5 4 12 0 18-3-8 1-13-1-11-10C16 42 36 20 54 10c8-4 14-2 12 12z" fill="url(#ring)" /></svg></span>
      <span class="slot active"><svg width="72" height="70" viewBox="0 0 72 70"><path d="M1 66V6l3-6h26l3 6h37v60z" fill="#e9cf6c" stroke="#caa83f" /><path d="M1 67V22h36l4-9h28l2 6v48z" fill="url(#folder)" stroke="#d6b650" /><path d="M22 12l3-6h22l2 6z" fill="#f7e39a" /><rect x="8" y="2" width="20" height="4" fill="#fff" /><rect x="9" y="1.500" width="4" height="4.500" fill="#3a9a3a" /><rect x="26" y="7" width="20" height="4" fill="#fff" /><rect x="27" y="7" width="4" height="4.500" fill="#d05a28" /><rect x="45" y="13" width="20" height="4" fill="#fff" /><rect x="46" y="13" width="4" height="4.500" fill="#2e7fd0" /><path d="M8 69V48c0-4 2-5 5-5h47c3 0 5 1 5 5v21H49V58H24v11z" fill="url(#sky)" stroke="#8fc4e0" /></svg></span>
      <span class="slot"><svg width="80" height="80" viewBox="0 0 80 80"><rect width="80" height="80" rx="14" fill="#38b6f0" /><path d="M20 58L38 80H66Q80 80 80 66V36L66 22z" fill="#0c9ddb" /><path d="M13 25l4-5h46l4 5-2 34q0 1-2 1H16z" fill="#fdfdfd" /><path d="M13 25l4-5h46l4 5z" fill="#cfcfcf" /><path d="M28 33c0 18 24 18 24 0" fill="none" stroke="#1aa4e0" stroke-width="3" /><circle cx="28" cy="33" r="2" fill="#555" /><circle cx="52" cy="33" r="2" fill="#555" /></svg></span>
      <span class="slot"><svg width="80" height="80" viewBox="0 0 80 80"><path d="M0 0h80v80H0z" fill="#fff" /><path d="M12 1v50L31 1zM69 1v50L50 1zM41 20L30 41h10l4 10h10z" fill="#df2524" /><text x="12" y="77" font-family="Open Sans, sans-serif" font-weight="700" font-size="21" textLength="57" lengthAdjust="spacingAndGlyphs" fill="#111">Adobe</text></svg></span>
      <span class="slot"><svg width="66" height="72" viewBox="0 0 66 72"><path d="M5 36C-2 12 14 3 33 3s35 9 28 33" fill="none" stroke="url(#phones)" stroke-width="7" /><path d="M4 34l16-2v38C8 62 1 48 4 34zM62 34l-16-2v38c12-8 19-22 16-36z" fill="#f79a1e" /><rect x="19" y="30" width="11" height="41" rx="4" fill="#63676e" /><rect x="36" y="30" width="11" height="41" rx="4" fill="#63676e" /><path d="M26 32v37M40 32v37" stroke="#9a9da3" stroke-width="2" /></svg></span>
      <span class="slot"><svg width="80" height="80" viewBox="0 0 80 80"><path d="M0 0h80v64H52l8 16H14l10-16H0z" fill="#f6f7f9" /><path d="M4 4h72v57H4z" fill="url(#lenovo)" /><path d="M4 44c20-8 40 6 72-3v5c-30 7-50-6-72 0z" fill="#e6f3fb" /><path d="M30 65h20l6 14H18z" fill="#d5d7db" /><text x="8" y="36" font-family="Open Sans, sans-serif" font-weight="800" font-style="italic" font-size="16" textLength="60" lengthAdjust="spacingAndGlyphs" fill="#fff">lenovo</text></svg></span>
      <span class="slot"><svg width="74" height="74" viewBox="0 0 74 74"><circle cx="37" cy="37" r="37" fill="#ffcd40" /><path d="M37 0A37 37 0 0 1 69 20H37L22 44 6 17A37 37 0 0 1 37 0z" fill="#dc4b3e" /><path d="M6 17L22 46 37 54 52 46 36 74A37 37 0 0 1 6 17z" fill="#1aa260" /><circle cx="37" cy="37" r="17" fill="#f1f1f1" /><circle cx="37" cy="37" r="13.500" fill="#4a87f4" /></svg></span>
      <span class="slot"><svg width="75" height="75" viewBox="0 0 75 75"><path d="M0 0h75v75H0z" fill="#048a04" /><path d="M15 26l47-7v41l-10 4-37-7z" fill="#fff" /><path d="M24 25c0-18 16-18 17-2M31 24c1-14 14-14 14-3" fill="none" stroke="#fff" stroke-width="2.500" /><path d="M22 33l8-1v9h-8zM32 31.500l12-1.500v11H32zM22 43h8v8l-8-1zM32 43h12v10l-12-1.500z" fill="#048a04" /></svg></span>
      <span class="slot"><svg width="80" height="80" viewBox="0 0 80 80"><path d="M1 1h78v78H1z" fill="url(#red)" stroke="#bbb" stroke-width="2" /><path d="M0 1h80" stroke="#333" stroke-width="2" /><path d="M40 16l23 12v32L40 74 17 60V28z" fill="none" stroke="#fff" stroke-width="2.600" /><path d="M23 34l17 9 17-9M40 43v24" fill="none" stroke="#fff" stroke-width="4" /></svg></span>
      <span class="slot"><svg width="80" height="80" viewBox="0 0 80 80"><path d="M0 38C2 14 20 0 40 0c24 0 40 16 40 34 0 20-26 30-32 23-2-3 4-9 2-18C44 20 12 16 0 38z" fill="url(#edgeA)" /><path d="M0 42C2 18 36 12 48 36 30 30 24 46 34 62c6 10 16 14 28 12-8 6-20 8-30 5C12 74-1 60 0 42z" fill="url(#edgeB)" /><path d="M46 31C22 30 14 52 26 68c8 14 28 16 40 6 5-4 7-9 8-14-20 6-40-4-28-29z" fill="#11529f" /></svg></span>
      <span class="slot active faint"><svg width="58" height="70" viewBox="0 0 58 70"><path d="M0 0h55v64H0z" fill="url(#paper)" /><path d="M0 0h55v8H0z" fill="#4681b3" /><path d="M-1 64h58v6H0z" fill="#a9c0d2" /><path d="M32 16h18M32 20h18M32 25h18M32 30h18" stroke="#3f7cc4" stroke-width="2" /><path d="M5 45h45M5 49h40M5 53h45M5 57h38M5 61h42" stroke="#9aa9bf" stroke-width="1.600" /><text x="3" y="39" font-family="Liberation Serif, serif" font-weight="700" font-size="36" fill="#f28a2e">A</text></svg></span>
      <span class="slot active bright"><svg width="78" height="80" viewBox="0 0 78 80"><use href="#arcmap" /></svg></span>

      <div class="tray">
        <svg class="kb" width="60" height="36" viewBox="0 0 60 36"><rect x="1" y="1" width="58" height="34" rx="2" fill="#fff" stroke="#333" /><rect x="4" y="5" width="52" height="26" fill="#333" /><path d="M6 10h48M6 18h48" stroke="#fff" stroke-width="6" stroke-dasharray="6.400 1.900" /><path d="M6 26.500h8M17 26.500h26M46 26.500h8" stroke="#fff" stroke-width="5.500" /></svg>
        <div class="battery"><div class="cell"><span v-fit="56" class="fit">41%</span></div><b></b></div>
        <svg class="up" width="19" height="11" viewBox="0 0 19 11"><path d="M9.500 0L19 11H0z" fill="#eee" /></svg>
        <svg class="wheel" width="40" height="40" viewBox="0 0 40 40"><circle cx="20" cy="20" r="19.500" fill="#77787a" stroke="#aaa" /><circle cx="20" cy="19" r="11.500" fill="none" stroke="#fff" stroke-width="3" /><circle cx="20" cy="19" r="13.500" fill="none" stroke="#fff" stroke-width="1.500" stroke-dasharray="1.500 1.500" /><path d="M11 14l9 5 9-5M20 19v11" stroke="#fff" stroke-width="3" fill="none" /></svg>
        <svg class="flag" width="40" height="40" viewBox="0 0 40 40"><path d="M1 1h5v37H1z" fill="#fff" stroke="#222" /><path d="M7 4c8-4 12 4 18 4l2 7h11l-5 9c-10 2-16-3-26 0z" fill="#fff" stroke="#333" /><circle cx="29" cy="29" r="10" fill="#e01818" /><path d="M25 25l8 8M33 25l-8 8" stroke="#fff" stroke-width="3" /></svg>
        <svg class="sig" width="40" height="30" viewBox="0 0 40 30"><g fill="#fff" stroke="#222"><path d="M1 22h6v7H1zM9 18h6v11H9zM17 13h6v16h-6zM24 6h6v23h-6z" /><path d="M32 1h7v28h-7z" fill="#8e8a80" /></g></svg>
        <svg class="vol" width="40" height="38" viewBox="0 0 40 38"><path d="M1 11h7L18 1v36L8 27H1z" fill="#fff" stroke="#222" /><path d="M22 13q4 6 0 12M26 9q7 10 0 20M31 5q9 14 0 28" fill="none" stroke="#ddd" stroke-width="1.700" /></svg>
        <div class="lang"><span v-fit="58" class="fit">ENG</span></div>
        <div class="clock"><span><span v-fit="69" class="fit">19:57</span></span><span><span v-fit="149" class="fit">27/03/2021</span></span></div>
      </div>
    </footer>
  </div>
</template>

<style>
body { overflow: hidden; }
</style>

<style scoped>
.screen { width: 3200px; height: 1800px; display: flex; flex-direction: column; overflow: hidden; background: linear-gradient(90deg, #f0f0f0, #fcfcfc); font: 31px/45px "Open Sans", "Noto Sans", sans-serif; color: #1c1a22; }
.screen svg { display: block; flex: none; }
.screen .defs { position: absolute; }
.fit { display: inline-block; white-space: pre; transform-origin: 0 50%; flex: none; }

.titlebar { height: 57px; flex: none; background: #eabc6f; border-bottom: 1px solid #c8974a; display: flex; }
.app-icon { width: 41px; height: 41px; margin: 9px 0 0 2px; }
.title { margin-left: 1411px; font-size: 36px; line-height: 62px; color: #2a2420; width: 300px; }
.controls { margin-left: auto; display: flex; }
.min { width: 16px; height: 4px; background: #2a2118; margin: 29px 50px 0 0; }
.restore { width: 19px; height: 18px; margin: 16px 23px 0 0; }
.close { width: 116px; height: 51px; background: #c75050; margin-right: 3px; display: flex; align-items: center; justify-content: center; }

.menu { height: 65px; flex: none; display: flex; align-items: flex-start; padding-top: 9px; box-sizing: border-box; }
.entry { display: flex; flex: none; }

.bar { display: flex; height: 62px; flex: none; padding-left: 8px; margin-bottom: 3px; }
.bar1 { margin-bottom: 0; }
.strip { display: flex; align-items: center; background: linear-gradient(#fcfcfc, #f0f0f0); border-radius: 4px 0 0 4px; }
.bar0 .strip { width: 1514px; }
.bar1 .strip { width: 1283px; }
.grip { width: 6px; height: 38px; margin: -6px 4px 0 7px; background: repeating-linear-gradient(#b9b9b9 0 5px, transparent 5px 10.500px); }
.btn { width: 55.150px; height: 55px; display: flex; align-items: center; justify-content: center; flex: none; box-sizing: border-box; margin-top: -3px; }
.bar1 .btn { width: 55.300px; }
.btn svg { width: 39px; height: 39px; overflow: visible; }
.btn.on { border: 2.500px solid #3e9bf8; background: #e3eefa; }
.sep { width: 2px; height: 35px; margin: -5px 6px 0; background: #b9bbbd; flex: none; }
.caret { width: 29px; height: 8px; flex: none; background: #000; clip-path: polygon(7px 0, 21px 0, 14px 8px); }
.caret.dim { background: #a5a5a5; }
.combo { width: 369px; height: 52px; margin: -4px 3px 0 0; box-sizing: border-box; border: 3px solid #abadb3; background: #fff; display: flex; align-items: center; padding: 0 8px 4px 7px; flex: none; }
.combo svg { margin: 5px 0 0 auto; }
.endcap { width: 28px; height: 62px; background: linear-gradient(#f4f4f4, #cfcfcf 55%, #a2a2a2); display: flex; flex-direction: column; align-items: center; padding-top: 37px; box-sizing: border-box; border-radius: 0 0 3px 0; }
.endcap i { width: 14px; height: 3px; background: #000; box-shadow: 2px 2px #fff; }
.endcap b { width: 14px; height: 9px; margin-top: 6px; background: #000; clip-path: polygon(0 0, 100% 0, 50% 100%); }

.main { height: 1413px; flex: none; display: flex; }
.toc { width: 500px; margin-right: 10px; flex: none; }
.toc-head { height: 62px; background: linear-gradient(90deg, #bccad8, #d7e4f1); display: flex; align-items: flex-start; padding-left: 10px; font-size: 38px; line-height: 68px; }
.pin { margin: 20px 0 0 123px; }
.x { margin: 22px 0 0 19px; }
.toc-tools { height: 66px; display: flex; align-items: center; padding-left: 10px; background: linear-gradient(#fcfcfc, #f0f0f0); }
.toc-tools .btn { width: 54.900px; margin-top: 0; }
.toc-tools .sep { margin: 0 6px; }
.tree { width: 498px; height: 1281px; box-sizing: border-box; border: 3px solid #828790; background: #fff; display: flex; overflow: hidden; }
.rows { width: 449px; height: 1275px; padding-top: 1px; overflow: hidden; flex: none; box-sizing: border-box; }
.row { height: 45px; display: flex; align-items: center; }
.row .fit { padding-bottom: 0; }
.exp { width: 22px; height: 22px; box-sizing: border-box; border: 2px solid #a0a0a0; border-radius: 3px; background: linear-gradient(#4a60a8, #4a60a8) center / 13px 2.500px no-repeat, linear-gradient(#fff, #dcdcdc); margin-top: 9px; flex: none; }
.root { padding-left: 20px; }
.stack { margin: 0 13px 0 15px; }
.item { padding-left: 67px; }
.check { width: 28px; height: 28px; margin: 5px 15px 0 20px; }
.label { padding: 0 5px; height: 45px; display: flex; align-items: center; }
.sel { background: #3399ff; color: #fff; }
.sub { padding-left: 204px; }
.band { padding-left: 147px; }
.swatch { width: 38px; height: 27px; box-sizing: border-box; border: 3px solid #6e6e6e; margin: 3px 7px 0 0; }
.raster { height: 270px; }
.ramp-row { display: flex; padding-left: 147px; height: 135px; }
.ramp { width: 33px; height: 90px; background: linear-gradient(#f4f4f4, #909090 50%, #000); margin: 1px 12px 0 0; }
.ends { display: flex; flex-direction: column; justify-content: space-between; height: 135px; margin-top: -8px; }
.ends > span { display: flex; height: 45px; }
.vscroll { width: 40px; margin-left: -1px; background: #f0f0f0; display: flex; flex-direction: column; align-items: center; }
.vscroll svg, .vbar svg { width: 19px; height: 16px; }
.vscroll svg:first-child { margin-top: 17px; }
.vscroll i { width: 38px; height: 290px; margin-top: 11px; background: #cdcdcd; }
.vscroll svg:last-child { margin: auto 0 13px; }

.view { width: 2632px; flex: none; }
.view-top { display: flex; height: 1367px; }
.pane { width: 2590px; box-sizing: border-box; border: solid #787878; border-width: 5px 0 0 5px; border-right: 2px solid #e3e3e3; background: #fff; border-bottom: 2px solid #e0e0e0; display: flex; }
.pane canvas { margin: 250px 0 0 582px; width: 1011px; height: 1018px; display: block; }
.vbar { width: 38px; margin-left: 2px; border-top: 5px solid #787878; box-sizing: border-box; background: #f0f0f0; display: flex; flex-direction: column; align-items: flex-start; }
.vbar svg { margin-left: 7px; }
.vbar svg:first-child { margin-top: 15px; }
.vbar i { width: 35px; height: 1273px; margin-top: 12px; background: #cdcdcd; }
.vbar svg:last-child { margin-top: 16px; }
.view-bottom { height: 41px; display: flex; align-items: center; background: #f0f0f0; border-left: 5px solid #8a8a8a; border-bottom: 2px solid #e3e3e3; box-sizing: border-box; margin-top: 2px; padding-bottom: 2px; }
.vb { width: 42px; height: 38px; display: flex; align-items: center; justify-content: center; flex: none; box-sizing: border-box; padding-bottom: 1px; }
.vb.on { background: #b3d3f2; border-bottom: 2px solid #4a9ae8; }
.vsep { width: 2px; height: 32px; background: #8a8a8a; margin-left: 6px; }
.vb.ref { margin-left: 12px; }
.hl { margin-left: 14px; }
.hthumb { width: 2307px; height: 35px; background: #cdcdcd; margin-left: 11px; }
.hr { margin-left: 16px; }

.tabs { margin-left: 8px; width: 50px; padding-top: 7px; flex: none; }
.tab { width: 56px; box-sizing: border-box; border: 3px solid #9c9c9c; border-radius: 8px; background: #f0f0f0; padding: 8px 0 0 3px; display: flex; flex-direction: column; align-items: flex-start; }
.tab.toolbox { margin-top: 35px; }
.tab svg { width: 40px; height: 40px; }
.turn { writing-mode: vertical-rl; display: block; flex: none; white-space: pre; line-height: 42px; transform-origin: 50% 0; color: #66626a; margin: 8px 0 0 -1px; }

.status { height: 49px; flex: none; display: flex; background: #f0f0f0; line-height: 53px; padding-left: 2504px; }
.status i { width: 4px; background: #f5f5f5; margin: 6px 45px 0 0; }
.status i + i { margin-right: 11px; }

.taskbar { height: 88px; box-sizing: border-box; flex: none; position: relative; display: flex; background: linear-gradient(#5f4c2d, #58472a); border-top: 1px solid #9b8c72; color: #fff; }
.art { position: absolute; left: 1050px; top: 0; }
.slot { position: relative; width: 124px; margin: 0 2px; height: 86px; display: flex; align-items: center; justify-content: center; flex: none; box-sizing: border-box; }
.slot.start { width: 90px; margin: 0; }
.active { background: rgba(255, 255, 255, .22); border: 1px solid rgba(255, 255, 255, .5); }
.faint { background: rgba(230, 200, 170, .22); }
.bright { background: rgba(235, 225, 205, .38); border: 2px solid rgba(255, 255, 255, .8); }
.tray { margin-left: auto; display: flex; align-items: flex-start; flex: none; width: 890px; }
.kb { margin-top: 25px; }
.battery { display: flex; align-items: center; margin: 17px 0 0 35px; }
.cell { width: 100px; height: 50px; box-sizing: border-box; border: 5px solid #fff; background: linear-gradient(90deg, #0c6 0 47px, #444 47px); outline: 1px solid #333; display: flex; align-items: center; justify-content: center; font-size: 28px; line-height: 38px; }
.battery b { width: 8px; height: 24px; background: #fff; }
.up { margin: 61px 0 0 72px; }
.wheel { margin: 25px 0 0 71px; }
.flag { margin: 25px 0 0 20px; }
.sig { margin: 30px 0 0 20px; }
.vol { margin: 26px 0 0 21px; }
.lang { margin: 24px 0 0 29px; font-size: 29px; }
.clock { display: flex; flex-direction: column; align-items: center; margin: 4px 0 0 36px; font-size: 29px; line-height: 42px; }
.clock > span { display: flex; height: 42px; }
</style>
